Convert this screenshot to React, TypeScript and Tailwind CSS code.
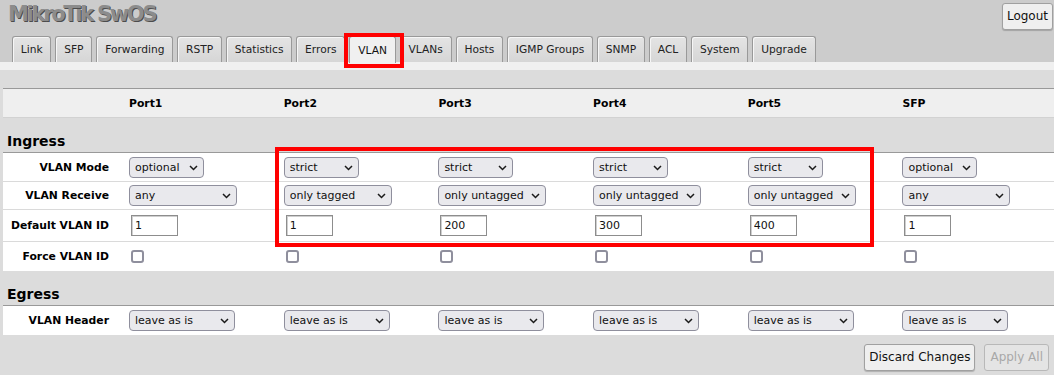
import { useState } from "react";

const tabs = ["Link", "SFP", "Forwarding", "RSTP", "Statistics", "Errors", "VLAN", "VLANs", "Hosts", "IGMP Groups", "SNMP", "ACL", "System", "Upgrade"];
const ports = ["Port1", "Port2", "Port3", "Port4", "Port5", "SFP"];

const modeOpts = ["disabled", "optional", "enabled", "strict"];
const receiveOpts = ["any", "only tagged", "only untagged"];
const headerOpts = ["leave as is", "always strip", "add if missing"];

const modes = ["optional", "strict", "strict", "strict", "strict", "optional"];
const receives = ["any", "only tagged", "only untagged", "only untagged", "only untagged", "any"];
const vlanIds = ["1", "1", "200", "300", "400", "1"];

const grid = "grid grid-cols-[126px_repeat(5,154.7px)_1fr] items-center";

function Select({ value, options, width }: { value: string; options: string[]; width: string }) {
  return (
    <div className={`relative ${width}`}>
      <select
        defaultValue={value}
        className="appearance-none block w-full h-[21px] bg-[#e9e9ed] border border-[#8f8f9d] rounded-[4px] pl-[5px] text-[11px] leading-[19px] text-[#111] outline-none"
      >
        {options.map((o) => (
          <option key={o}>{o}</option>
        ))}
      </select>
      <svg className="absolute right-[6px] top-[8px] pointer-events-none" width="9" height="6" viewBox="0 0 9 6">
        <path d="M1 1l3.5 3.5L8 1" fill="none" stroke="#1a1a1a" strokeWidth="1.5" />
      </svg>
    </div>
  );
}

function Label({ children }: { children: string }) {
  return <div className="text-right pr-[20px] font-bold text-[10.8px] text-black">{children}</div>;
}

function Section({ title }: { title: string }) {
  return (
    <div className="ml-[3px] h-[35px] flex items-end pb-[3px] pl-[4px] border-b border-[#999]">
      <span className="font-bold text-[14px] leading-[16px] text-black">{title}</span>
    </div>
  );
}

export default function App() {
  const [active] = useState("VLAN");

  return (
    <div className="w-full h-[375px] overflow-hidden bg-[#dcdcdc] font-['DejaVu_Sans',sans-serif] text-[10.8px] leading-[13px]">
      {/* Top bar */}
      <div className="bg-[#cccccc] h-[62px] flex flex-col">
        <div className="h-[36px] flex justify-between items-start">
          <div className="pl-[8px] pt-[1px] text-[21px] leading-[26px] font-bold tracking-[-2.3px] text-[#8c8c8c] [text-shadow:1px_1px_0_#4c4c4c]">
            MikroTik SwOS
          </div>
          <button className="mt-[3px] mr-[1px] h-[27px] px-[4px] text-[12px] text-[#111] bg-[#efefef] border border-[#a0a0a0] rounded-[3px] shadow-[0_1px_1px_rgba(0,0,0,0.2)]">
            Logout
          </button>
        </div>
        <div className="flex gap-[4px] pl-[12px] h-[26px] items-end text-[10.67px]">
          {tabs.map((t) =>
            t === active ? (
              <div key={t} className="relative h-[27px] -mb-px px-[7.8px] flex items-center border border-b-0 border-[#999] rounded-t-[3px] bg-[#f0f0f0] text-[#111]">
                {t}
                <div className="absolute left-[-6px] top-[-4px] w-[60px] h-[35px] border-[4px] border-[#ff0000] pointer-events-none" />
              </div>
            ) : (
              <div key={t} className="h-[26px] px-[7.8px] flex items-center border border-b-0 border-[#999] rounded-t-[3px] bg-linear-to-b from-[#e4e4e4] to-[#d6d6d6] shadow-[inset_1px_1px_0_#f6f6f6] text-[#222]">
                {t}
              </div>
            )
          )}
        </div>
      </div>
      <div className="h-[8px] bg-[#f0f0f0]" />

      {/* Table */}
      <div className="pt-[18px]">
        <div className={`${grid} ml-[3px] h-[30px] bg-[#efefef] border-t border-b border-t-[#999] border-b-[#d2d2d2] font-bold`}>
          <div />
          {ports.map((p) => (
            <div key={p}>{p}</div>
          ))}
        </div>

        <Section title="Ingress" />
        <div className="relative ml-[3px]">
          <div className={`${grid} h-[29px] bg-white border-b border-[#dadada]`}>
            <Label>VLAN Mode</Label>
            {modes.map((m, i) => (
              <Select key={i} value={m} options={modeOpts} width="w-[75px]" />
            ))}
          </div>
          <div className={`${grid} h-[28px] bg-white border-b border-[#dadada]`}>
            <Label>VLAN Receive</Label>
            {receives.map((r, i) => (
              <Select key={i} value={r} options={receiveOpts} width="w-[108px]" />
            ))}
          </div>
          <div className={`${grid} h-[32px] bg-white border-b border-[#dadada]`}>
            <Label>Default VLAN ID</Label>
            {vlanIds.map((v, i) => (
              <div key={i}>
                <input
                  type="text"
                  defaultValue={v}
                  className="block ml-[2px] w-[47px] h-[21px] bg-white border border-[#8d8d8d] shadow-[inset_1px_1px_0_#cfcfcf] pl-[3px] text-[11px] text-[#111] outline-none"
                />
              </div>
            ))}
          </div>
          <div className={`${grid} h-[29px] bg-white`}>
            <Label>Force VLAN ID</Label>
            {ports.map((p) => (
              <div key={p}>
                <input type="checkbox" className="appearance-none block ml-[2px] w-[13px] h-[13px] border-2 border-[#8f8f9d] rounded-[3px] bg-white" />
              </div>
            ))}
          </div>
          <div className="absolute left-[272px] top-[-6px] w-[599px] h-[100px] border-[4px] border-[#ff0000] pointer-events-none" />
        </div>

        <Section title="Egress" />
        <div className={`${grid} ml-[3px] h-[29px] bg-white`}>
          <Label>VLAN Header</Label>
          {ports.map((p) => (
            <Select key={p} value="leave as is" options={headerOpts} width="w-[106px]" />
          ))}
        </div>

        <div className="flex justify-end gap-[9px] pr-[5px] mt-[9px]">
          <button className="h-[27px] px-[4px] text-[12px] text-[#111] bg-[#efefef] border border-[#a0a0a0] rounded-[3px] shadow-[0_1px_1px_rgba(0,0,0,0.2)]">
            Discard Changes
          </button>
          <button disabled className="h-[27px] px-[5px] text-[12px] text-[#a8a8a8] bg-[#e4e4e4] border border-[#b8b8b8] rounded-[3px]">
            Apply All
          </button>
        </div>
      </div>
    </div>
  );
}
